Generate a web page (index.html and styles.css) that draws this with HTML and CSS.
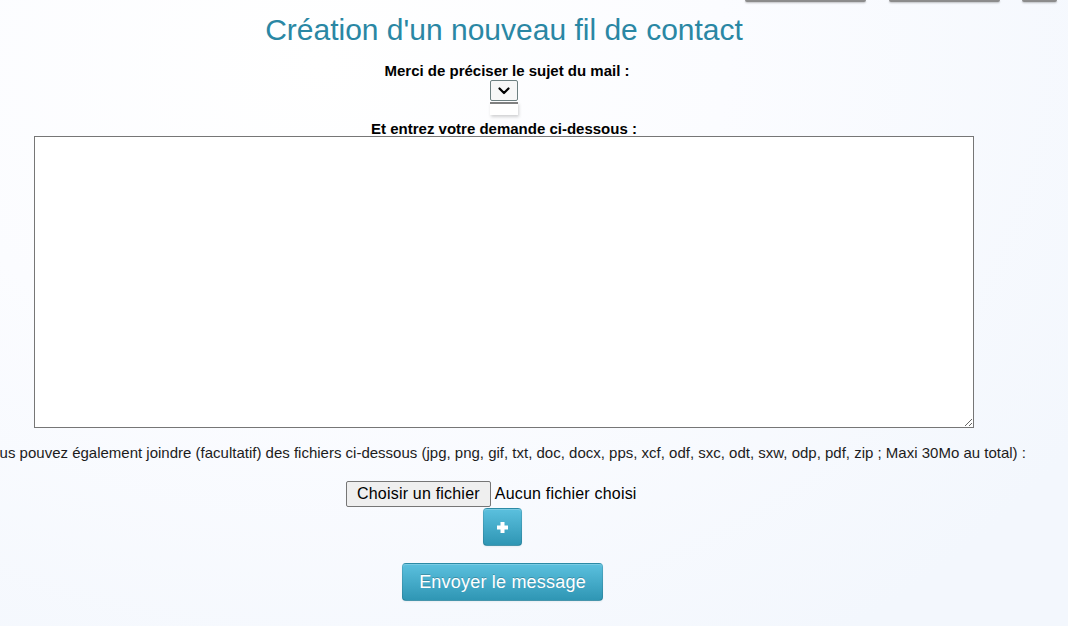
FILE: index.html
```html
<!DOCTYPE html>
<html lang="fr">
<head>
<meta charset="utf-8">
<title>Création d'un nouveau fil de contact</title>
<link rel="stylesheet" href="styles.css">
</head>
<body>
<div class="topbar">
  <span class="tab tab-a"></span>
  <span class="tab tab-b"></span>
  <span class="tab tab-c"></span>
</div>
<main class="page">
  <h1 class="title">Création d'un nouveau fil de contact</h1>
  <form class="contact-form">
    <label class="label label-subject" for="sujet">Merci de préciser le sujet du mail :</label>
    <div class="select-wrap">
      <select id="sujet" class="subject-select"></select>
      <svg class="select-chevron" width="12" height="8" viewBox="0 0 12 8"><path d="M1.5 1.5 L6 6 L10.5 1.5" fill="none" stroke="#000" stroke-width="2.2" stroke-linecap="round" stroke-linejoin="round"/></svg>
      <div class="select-list"></div>
    </div>
    <label class="label label-message" for="message">Et entrez votre demande ci-dessous :</label>
    <textarea id="message" class="message"></textarea>
    <p class="files-info">Vous pouvez également joindre (facultatif) des fichiers ci-dessous (jpg, png, gif, txt, doc, docx, pps, xcf, odf, sxc, odt, sxw, odp, pdf, zip ; Maxi 30Mo au total) :</p>
    <label class="file-field">
      <span class="file-btn">Choisir un fichier</span>
      <span class="file-name">Aucun fichier choisi</span>
      <input type="file" class="file-input">
    </label>
    <button type="button" class="btn btn-plus" aria-label="Ajouter un fichier">
      <svg width="11" height="11" viewBox="0 0 11 11"><rect x="3.5" y="0" width="4" height="11" fill="#fff"/><rect x="0" y="3.5" width="11" height="4" fill="#fff"/></svg>
    </button>
    <button type="submit" class="btn btn-send">Envoyer le message</button>
  </form>
</main>
</body>
</html>
```

FILE: styles.css
```css
html, body {
  margin: 0;
  padding: 0;
}
body {
  width: 1068px;
  height: 626px;
  overflow: hidden;
  font-family: "Liberation Sans", Arial, sans-serif;
  color: #111;
  background: radial-gradient(ellipse 900px 700px at 30% 10%, #ffffff 0%, #fbfcff 45%, #f3f7fd 100%);
}
.topbar {
  display: flex;
  justify-content: flex-end;
  gap: 23px;
  padding-right: 11px;
  height: 2px;
}
.tab {
  display: block;
  height: 2px;
  background: #8c8c8c;
  border-radius: 0 0 3px 3px;
  box-shadow: 0 1px 2px rgba(0, 0, 0, 0.25);
}
.tab-a { width: 121px; }
.tab-b { width: 111px; }
.tab-c { width: 35px; margin-left: -1px; }

.page {
  width: 1008px;
  text-align: center;
}
.title {
  margin: 11px 0 0;
  font-size: 30px;
  line-height: 34px;
  font-weight: normal;
  color: #2a87a4;
}
.contact-form {
  display: flex;
  flex-direction: column;
  align-items: center;
  margin-top: 16px;
}
.label {
  display: block;
  font-size: 15px;
  font-weight: bold;
  color: #000;
}
.label-subject {
  line-height: 16px;
  padding-left: 6px;
}
.select-wrap {
  position: relative;
  margin-top: 1px;
  width: 28px;
  height: 21px;
}
.subject-select {
  display: block;
  width: 28px;
  height: 21px;
  margin: 0;
  padding: 0;
  border: 1px solid #6d7f80;
  border-radius: 2px;
  background: #f7f7f7;
  -webkit-appearance: none;
  appearance: none;
  font-size: 13px;
}
.select-chevron {
  position: absolute;
  left: 8px;
  top: 7px;
  pointer-events: none;
}
.select-list {
  position: absolute;
  left: 0;
  top: 22px;
  width: 28px;
  height: 13px;
  background: #fff;
  border-top: 2px solid #808080;
  box-sizing: border-box;
  box-shadow: 1px 2px 3px rgba(0, 0, 0, 0.18);
}
.label-message {
  margin-top: 20px;
  line-height: 15px;
}
.message {
  display: block;
  box-sizing: border-box;
  width: 940px;
  height: 292px;
  margin: 0;
  border: 1px solid #767676;
  background: #fff;
  resize: both;
}
.files-info {
  margin: 16px 0 0;
  white-space: nowrap;
  font-size: 15px;
  line-height: 17px;
  color: #1c1c1c;
}
.file-field {
  display: flex;
  align-items: center;
  width: 316px;
  margin-top: 20px;
  font-size: 16px;
  letter-spacing: 0.2px;
  color: #000;
}
.file-btn {
  box-sizing: border-box;
  height: 26px;
  line-height: 24px;
  padding: 0 10px;
  border: 1px solid #767676;
  border-radius: 2px;
  background: #efefef;
}
.file-name {
  margin-left: 4px;
}
.file-input {
  display: none;
}
.btn {
  box-sizing: border-box;
  border: 1px solid #2a8aa8;
  border-color: rgba(0, 0, 0, 0.08) rgba(0, 0, 0, 0.1) rgba(0, 0, 0, 0.22);
  border-radius: 4px;
  background: linear-gradient(to bottom, #5bc0de 0%, #2f96b4 100%);
  color: #fff;
  font-family: "Liberation Sans", Arial, sans-serif;
  cursor: pointer;
  box-shadow: inset 0 1px 0 rgba(255, 255, 255, 0.2), 0 1px 2px rgba(0, 0, 0, 0.05);
}
.btn-plus {
  display: flex;
  align-items: center;
  justify-content: center;
  width: 39px;
  height: 38px;
  margin: 1px 3px 0 0;
  padding: 0;
}
.btn-send {
  width: 201px;
  height: 38px;
  margin: 17px 3px 0 0;
  padding: 0;
  font-size: 18px;
  letter-spacing: 0.2px;
  text-shadow: 0 -1px 0 rgba(0, 0, 0, 0.2);
}
```
